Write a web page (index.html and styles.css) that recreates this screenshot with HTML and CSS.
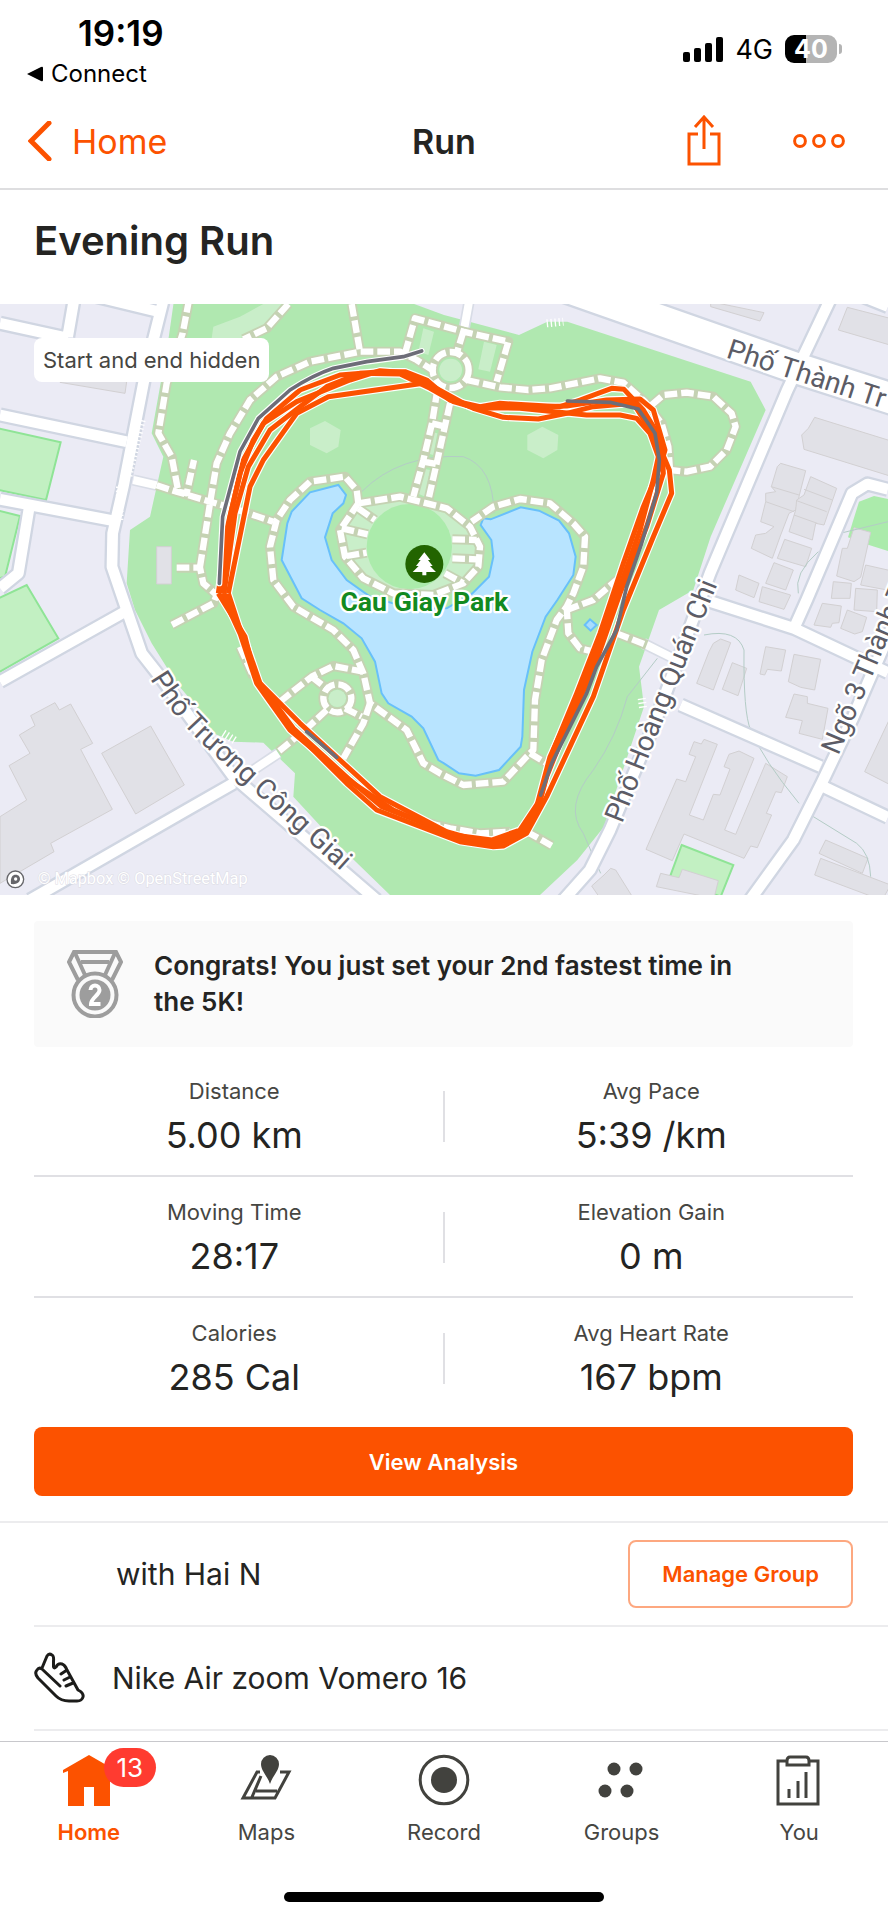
FILE: index.html
```html
<!DOCTYPE html>
<html lang="en">
<head>
  <meta charset="UTF-8" />
  <meta name="viewport" content="width=device-width, initial-scale=1.0"/>
  <title>Evening Run</title>
  <link rel="stylesheet" href="styles.css">
</head>
<body>

  <div class="status">
    <div class="status-left">
      <div class="clock">19:19</div>
      <a class="back-app" href="#"><svg width="16" height="16" viewBox="0 0 16 16"><path d="M0 8L14 1Q16 0 16 2V14Q16 16 14 15Z"/></svg>Connect</a>
    </div>
    <div class="status-right">
      <svg width="40" height="25" viewBox="0 0 40 25"><rect y="15" width="7" height="10" rx="2"/><rect x="11" y="11" width="7" height="14" rx="2"/><rect x="22" y="6" width="7" height="19" rx="2"/><rect x="33" width="7" height="25" rx="2"/></svg>
      <span class="network">4G</span>
      <span class="battery">40</span>
    </div>
  </div>

  <header class="header">
    <a class="back" href="#"><svg width="24" height="40" viewBox="0 0 24 40"><path d="M21 2L3 20L21 38"/></svg>Home</a>
    <h1>Run</h1>
    <div class="actions">
      <button aria-label="Share"><svg width="34" height="52" viewBox="0 0 34 52"><path d="M11 19H2V49H32V19H23M17 34V3M8 12L17 2L26 12"/></svg></button>
      <button aria-label="More"><svg width="52" height="14" viewBox="0 0 52 14"><circle cx="7" cy="7" r="5.4"/><circle cx="26" cy="7" r="5.4"/><circle cx="45" cy="7" r="5.4"/></svg></button>
    </div>
  </header>

  <h2 class="title">Evening Run</h2>

  <div class="map">
    <svg viewBox="0 12 2664 1773">
      <defs>
        <g id="roads">
          <path d="M490 0L440 200L370 560L338 700L336 800L370 900L425 1060L480 1130L700 1430L1130 1800"/>
          <path d="M0 70L205 115M222 0L203 110M250 -20L475 35M0 345L380 425M0 598L340 662M88 620L55 820L0 865"/>
          <path d="M0 1145L375 935M90 1800L560 1530L700 1450"/>
          <path d="M2490 0L2362 270L2130 820L1960 1280L1830 1590L1770 1710L1690 1800"/>
          <path d="M2132 905L2382 985L2664 1118M2042 1215L2462 1400M2470 1460L2664 1552"/>
          <path d="M2664 568L2602 552L2556 580L2420 900L2382 985M2720 880L2560 1250L2465 1450L2380 1620L2250 1800M2590 -10L2664 20"/>
        </g>
        <g id="lanes"><path d="M1408 0L1390 100M400 540L470 556M700 1450L835 1360M1930 1030L2030 1080"/></g>
        <g id="paths">
          <path d="M567 0L548 100L500 250L475 400L515 470L535 575L560 580L582 480"/>
          <path d="M865 12L800 85L730 118M1055 12L1080 155"/>
          <path d="M600 800L630 610L650 490L690 400L750 300L830 230L930 185L1080 155L1200 155L1250 180L1305 215"/>
          <path d="M1215 160L1245 55L1390 95L1525 125L1490 245M1390 95L1370 160"/>
          <path d="M1400 240L1500 262L1585 270L1650 265L1800 235L1870 248L1935 305L1985 370L2005 440L2010 510"/>
          <path d="M1955 315L1990 285L2060 278L2140 290L2195 340L2207 380L2180 450L2130 500L2060 515L2010 510"/>
          <circle cx="1352" cy="210" r="54"/>
          <path d="M1312 270L1296 370L1270 480L1240 590M1350 310L1330 400L1310 490L1285 600M1296 370L1336 380M1270 485L1310 492"/>
          <path d="M470 556L530 575L630 605L700 625L820 665"/>
          <path d="M1075 610L1070 570L1035 530L930 545L870 600L830 660L810 740L820 840L880 920L1000 990L1060 1050L1090 1120L1110 1210L1220 1290L1270 1390L1320 1420L1390 1455L1510 1445L1580 1370L1600 1350L1605 1200L1625 1080L1670 960L1700 920L1720 880L1750 800L1755 710L1720 670L1650 610L1560 597L1480 620L1415 665"/>
          <path d="M1075 610L1200 590L1340 625L1410 680L1440 740L1435 800L1390 850L1300 885L1180 880L1090 835L1035 770L1020 690L1075 610"/>
          <path d="M1075 625L1125 660M1025 685L1103 703M1040 768L1100 758M1357 718L1430 720M1357 775L1430 778M1335 820L1390 850"/>
          <path d="M530 803H600L610 850L650 885L640 910L515 975"/>
          <path d="M840 1205L935 1130L1000 1098L1090 1115M935 1130L985 1170M980 1230L915 1290L835 1355M1035 1225L1085 1250M1110 1210L1090 1270L1030 1375"/>
          <circle cx="1012" cy="1195" r="42"/>
          <path d="M1700 920L1705 1000L1740 1045L1800 1060M1700 930L1780 900L1850 840M1850 1000L1940 1035M1590 1360L1640 1390M1580 1595L1655 1637"/>
          <path d="M720 1040L760 1130M1150 1500L1250 1560L1350 1585L1440 1600L1530 1595"/>
        </g>
        <path id="truong" d="M450 1136C510 1235 560 1290 640 1362S 950 1650 1090 1772"/>
        <g id="track">
          <path d="M665 880L690 650L720 520L760 420L800 355L900 270L1020 225L1140 215L1215 215L1280 240L1350 300L1440 320L1500 310L1680 320L1740 300L1835 265L1872 268L1930 330L1985 420L1990 520L1940 680L1860 880L1780 1110L1700 1280L1640 1430L1610 1540L1545 1610L1480 1635L1390 1620L1180 1530L1060 1450L870 1290L770 1150L720 1000L665 880"/>
          <path d="M655 880L680 690L730 480L790 370L890 305L1050 240L1140 212L1215 218L1300 260L1400 315L1440 325L1700 318L1820 300L1920 297L1960 330L1995 450L1980 500L1930 620L1870 790L1800 1000L1730 1180L1660 1350L1620 1500L1560 1590L1475 1620L1360 1605L1145 1520L1050 1440L880 1285L765 1130L735 1010L655 880"/>
          <path d="M685 880L750 560L790 480L890 340L985 290L1270 250L1340 290L1420 325L1510 352L1615 357L1700 340L1780 320L1900 310L1970 420L2008 510L2015 580L1960 710L1870 930L1780 1190L1640 1490L1580 1600L1510 1638L1480 1640L1380 1625L1130 1530L1040 1450L860 1270L770 1140L685 880"/>
          <path d="M672 880L705 640L745 500L810 390L900 320L980 260L1080 220L1200 222L1290 265L1360 305L1420 322L1560 325L1760 345L1860 345L1910 355L1950 400L1975 470L1960 540L1920 690L1860 860L1790 1060L1700 1260L1650 1370L1610 1520L1570 1600L1470 1632L1340 1595L1140 1490L1020 1380L900 1270L780 1150L735 1020L672 880"/>
        </g>
      </defs>

      <path class="ground" d="M0 0H2664V1785H0Z"/>
      <path class="park" d="M522 0L505 120L480 260L455 400L490 470L470 560L450 650L390 690L380 850L405 930L455 1030L530 1150L590 1220L640 1300L700 1325L790 1328L885 1420L880 1490L1000 1620L1170 1785H1620L1732 1680L1812 1580L1872 1400L1932 1220L1917 1100L1977 930L2080 870L2132 710L2297 330L2252 245L1702 65L1642 65L1557 105L1332 45L1210 0Z"/>
      <path class="glade" d="M640 80L720 50L790 12H860L780 90L720 115H635ZM1270 85L1302 95L1285 165L1255 155ZM1452 125L1490 135L1470 215L1435 208ZM975 363L1022 390L1015 440L980 460L930 435V385ZM1627 380L1675 405L1672 450L1630 475L1582 450V405ZM1290 395L1312 400L1300 465L1282 460ZM1265 505L1290 510L1275 590L1252 580Z"/>

      <g class="lot">
        <path d="M-5 385L182 427L138 600L-5 570ZM-5 632L60 648L15 830L-5 835ZM-5 895L80 855L175 1015L-5 1118Z"/>
        <path d="M2045 1635L2200 1695L2162 1790L2010 1730Z"/>
      </g>
      <path class="garden" d="M2577 605L2622 588L2670 598V755L2607 735L2544 712Z"/>

      <g class="house">
        <path d="M165 1208L178 1230L212 1212L278 1330L242 1348L337 1528L152 1630L162 1655L0 1750V1550L80 1500L27 1397L90 1360L58 1305L105 1277L92 1247ZM305 1360L452 1278L553 1455L407 1542Z"/>
        <path d="M470 740H514V852H470ZM180 235L380 245L375 280L180 247Z"/>
        <path d="M2132 5L2292 38L2280 63L2132 20ZM2542 22L2670 55V135L2515 90ZM2444 352L2670 422V528L2412 448L2405 405L2425 385Z"/>
      </g>
      <g class="house" transform="translate(1332 0)">
        <path d="M1010 490L1085 512L1070 570L1055 630L1035 640L1010 705L985 775L922 745L935 705L965 700L990 680L950 665L965 605V580L995 575L982 560L1000 500ZM982 560L1065 585M965 605L1050 635"/>
        <path d="M1100 530L1178 565L1140 675L1115 670L1105 720L1035 695L1055 630L1058 600L1080 585ZM1080 568L1165 600M1058 602L1148 635M1050 645L1120 670"/>
        <path d="M1022 718L1103 745L1085 800L1000 775ZM990 788L1048 810L1025 870L965 850ZM885 825L945 850L930 893L875 870ZM955 860L1040 885L1020 928L945 905Z"/>
        <path d="M1230 683L1280 697L1250 832L1230 845L1178 828L1195 745H1210ZM1265 795L1340 812V872L1250 855ZM1168 845L1222 850L1218 895H1162ZM1235 865L1300 870L1298 935L1230 930Z"/>
      </g>
      <g class="house" transform="translate(1332 900)">
        <path d="M1135 10L1192 18L1185 68L1165 70L1160 82L1110 75ZM1210 30L1268 52L1255 95L1232 102L1190 85Z"/>
        <path d="M830 117L860 128L808 270L758 250L795 155L808 130ZM865 188L908 205L882 287L835 268ZM965 140L1025 150L1012 213L970 208L962 225L948 222ZM1050 163L1130 178L1112 270L1070 262L1033 245ZM1050 282L1090 290V310L1152 325L1135 418L1065 400L1075 362L1025 352Z"/>
        <path d="M780 418L820 433L736 645L778 660L808 583L828 585L858 507L840 500L855 463L885 453L930 475L842 690L875 703L965 490L1030 530L1012 578L995 575L967 640L983 645L940 743L920 738L900 775L720 702L685 782L606 748L698 537L725 545L755 470L735 463L750 425L772 432Z"/>
        <path d="M715 808L823 842L810 895L637 860L650 820L705 833ZM500 805L515 810L565 890H465L443 858L480 825ZM1145 720L1272 775L1255 820L1125 760ZM1130 775L1340 855L1320 890H1285L1112 825ZM1340 350V555L1262 515Z"/>
      </g>
      <path class="creek" d="M2112 1005Q2212 985 2232 1050Q2230 1240 2252 1290Q2290 1380 2397 1510M1972 1075L1882 1190Q1850 1310 1780 1410Q1690 1520 1750 1600L1802 1720M2432 1545L2570 1630Q2610 1660 2612 1730M2664 665L2520 700M2455 755Q2380 820 2395 880M1085 575Q1200 460 1390 470Q1480 500 1482 640"/>

      <use href="#roads" class="road-edge"/>
      <path class="avenue-edge" d="M1500 -108L1802 -2L2400 208L2720 310"/>
      <use href="#lanes" class="lane-edge"/>
      <use href="#roads" class="road"/>
      <path class="avenue" d="M1500 -108L1802 -2L2400 208L2720 310"/>
      <use href="#lanes" class="lane"/>
      <path class="steps" d="M425 360L385 530M360 560L358 660M670 1300L710 1325M1640 70L1690 65M1925 1195L1930 1230"/>

      <path class="lake" d="M875 635L930 577L1015 555L1038 585L1030 610L998 640L975 712L995 780L1040 840L1110 890L1230 925H1340L1417 880L1467 830L1480 770L1474 720L1442 675L1450 655L1472 658L1562 622L1617 632L1677 662L1707 700L1727 770L1720 825L1672 900L1637 950L1597 1055L1572 1170L1567 1310L1562 1340L1497 1410L1427 1427L1377 1420L1332 1390L1315 1380L1270 1285L1235 1250L1165 1210L1145 1180L1125 1085L1085 1015L1030 970L960 930L905 895L845 780L862 670Z"/>
      <path class="pond" d="M1754 975L1770 958L1790 975L1772 992Z"/>
      <path class="glade" d="M1075 610L1200 590L1340 625L1410 680L1440 740L1435 800L1390 850L1300 885H1180L1090 835L1035 770L1020 690Z"/>
      <circle class="lawn" cx="1228" cy="740" r="128"/>

      <use href="#paths" class="path-edge"/>
      <use href="#paths" class="path"/>
      <circle class="glade" cx="1352" cy="210" r="34"/>
      <circle class="glade" cx="1012" cy="1195" r="26"/>

      <g class="label">
        <text transform="translate(2176 172) rotate(18)">Phố Thành Tr</text>
        <text transform="translate(1866 1572) rotate(-68.3)">Phố Hoàng Quán Chi</text>
        <text transform="translate(2515 1368) rotate(-67)">Ngõ 3 Thành T</text>
        <text><textPath href="#truong">Phố Trương Công Giai</textPath></text>
      </g>

      <use href="#track" class="track-edge"/>
      <use href="#track" class="track"/>
      <path class="hidden-edge" d="M658 850L668 650L720 455L775 355L870 270Q940 225 1000 205L1100 185L1210 170L1265 153"/>
      <path class="hidden-part" d="M658 850L668 650L720 455L775 355L870 270Q940 225 1000 205L1100 185L1210 170L1265 153M1702 303L1830 307L1915 327L1965 400L1978 480L1970 580L1925 730L1880 860L1850 990L1790 1100L1760 1180L1655 1390L1622 1485M920 1295L1010 1372"/>

      <circle class="poi" cx="1273" cy="792" r="57"/>
      <path class="tree" d="M1273 757L1291 780H1284L1298 798H1290L1308 816H1279V826H1267V816H1238L1256 798H1248L1262 780H1255Z"/>
      <text class="poi-name" x="1273" y="932">Cau Giay Park</text>

      <circle class="logo" cx="46" cy="1738" r="25"/>
      <path class="logo-mark" d="M33 1752C31 1730 38 1724 47 1724C56 1724 61 1731 60 1738C59 1748 50 1754 33 1752Z"/>
      <circle class="logo-dot" cx="47" cy="1737" r="5"/>
      <text class="credit" x="113" y="1752">© Mapbox © OpenStreetMap</text>
    </svg>
    <span class="notice">Start and end hidden</span>
  </div>

  <main>
    <div class="congrats">
      <svg width="56" height="68" viewBox="0 0 56 68">
        <path d="M11 30L2 12L7 2H49L54 12L45 30M8 3L18 25M48 3L38 25M14 12H42"/>
        <circle cx="28" cy="45" r="21.5"/>
        <circle class="disc" cx="28" cy="45" r="15.5"/>
        <path class="two" d="M23.500 40C23.500 34 32.500 34 32.500 40C32.500 45 24 48 24 54H33.500"/>
      </svg>
      <p>Congrats! You just set your 2nd fastest time in the 5K!</p>
    </div>

    <dl class="stats">
      <div><dt>Distance</dt><dd>5.00 km</dd></div>
      <div><dt>Avg Pace</dt><dd>5:39 /km</dd></div>
      <div><dt>Moving Time</dt><dd>28:17</dd></div>
      <div><dt>Elevation Gain</dt><dd>0 m</dd></div>
      <div><dt>Calories</dt><dd>285 Cal</dd></div>
      <div><dt>Avg Heart Rate</dt><dd>167 bpm</dd></div>
    </dl>

    <button class="btn">View Analysis</button>
  </main>

  <div class="rows">
    <div class="row group">
      <span>with Hai N</span>
      <button class="btn-outline">Manage Group</button>
    </div>
    <div class="row gear">
      <svg width="52" height="52" viewBox="0 0 52 52"><path d="M8 16L13 4Q15 1 18 3Q20 4 19.500 9V15Q20 17 22 15Q24 11 28 12Q31 13 33 18L44 38Q50 41 49 45Q48 49 43 49H35Q27 49 22 44L4 26Q0 21 3 18Q5 15 8 17L26 34M33 18L27 22M36 25L30 28M39 31L32 34"/></svg>
      <span>Nike Air zoom Vomero 16</span>
    </div>
  </div>

  <nav class="tabs">
    <a class="active" href="#">
      <span class="icon"><svg width="52" height="52" viewBox="0 0 52 52"><path class="fill" d="M0 16L26 1L52 16V19L47 17V52H31V33H21V52H5V17L0 19Z"/></svg><span class="badge">13</span></span>
      Home
    </a>
    <a href="#">
      <span class="icon"><svg width="52" height="52" viewBox="0 0 52 52"><path d="M20 18H17L3 44H35L49 18H40M21 22L12 43M16 37H37"/><path class="fill" d="M30 30C27 21 21 17 21 10A9 9 0 0 1 39 10C39 17 33 21 30 30Z"/></svg></span>
      Maps
    </a>
    <a href="#">
      <span class="icon"><svg width="52" height="52" viewBox="0 0 52 52"><circle cx="26" cy="26" r="23.800"/><circle class="fill" cx="26" cy="26" r="13"/></svg></span>
      Record
    </a>
    <a href="#">
      <span class="icon"><svg width="52" height="52" viewBox="0 0 52 52"><g class="fill"><circle cx="18" cy="15" r="6.500"/><circle cx="40" cy="15" r="6.500"/><circle cx="9" cy="37" r="6.500"/><circle cx="31" cy="37" r="6.500"/></g></svg></span>
      Groups
    </a>
    <a href="#">
      <span class="icon"><svg width="52" height="52" viewBox="0 0 52 52"><path d="M14 7H5V50H45V7H36M14 11V7Q14 3 17 3H33Q36 3 36 7V11ZM16 44V35M25 44V27M33 44V18"/></svg></span>
      You
    </a>
  </nav>

  <div class="home-bar"></div>

</body>
</html>
```
FILE: styles.css
```css
:root {
  --accent: #fc5200;
  --text: #242422;
  --muted: #464642;
  --line: #e0e0e4;
}

* {
  box-sizing: border-box;
}

body {
  margin: 0;
  min-height: 100vh;
  display: flex;
  flex-direction: column;
  font-family: Inter, 'Liberation Sans', sans-serif;
  background-color: #fff;
  color: var(--text);
}

svg {
  display: block;
  flex: none;
}

button {
  font-family: inherit;
  cursor: pointer;
}

a {
  color: inherit;
  text-decoration: none;
}

.status {
  display: flex;
  justify-content: space-between;
  height: 100px;
  padding: 12px 51px 0 27px;
  color: #000;
}

.clock {
  padding-left: 51px;
  font-size: 35px;
  line-height: 42px;
  font-weight: 600;
}

.back-app {
  display: flex;
  align-items: center;
  gap: 8px;
  font-size: 24px;
  line-height: 40px;
}

.status-right {
  display: flex;
  align-items: center;
  gap: 12px;
  height: 74px;
}

.network {
  font-size: 27px;
}

.battery {
  position: relative;
  width: 52px;
  height: 28px;
  border-radius: 9px;
  background: linear-gradient(90deg, #000 40%, #b4b4b4 40%);
  color: #fff;
  font-size: 25px;
  line-height: 28px;
  font-weight: 700;
  text-align: center;
}

.battery::after {
  content: '';
  position: absolute;
  right: -5px;
  top: 9px;
  width: 3px;
  height: 10px;
  border-radius: 0 3px 3px 0;
  background: #b4b4b4;
}

.header {
  display: grid;
  grid-template-columns: 1fr auto 1fr;
  align-items: center;
  height: 90px;
  padding: 0 28px 6px;
  border-bottom: 2px solid #dedee0;
}

.header svg {
  fill: none;
  stroke: var(--accent);
  stroke-width: 3;
}

.back {
  display: flex;
  align-items: center;
  gap: 20px;
  color: var(--accent);
  font-size: 34px;
}

.header .back svg {
  stroke-width: 5;
  stroke-linecap: round;
}

.header h1 {
  margin: 0;
  font-size: 34px;
  font-weight: 600;
}

.actions {
  display: flex;
  justify-content: flex-end;
  align-items: center;
  gap: 72px;
  padding-right: 15px;
}

.actions button {
  padding: 0;
  border: none;
  background: none;
}

.title {
  margin: 0;
  padding: 26px 34px 38px;
  font-size: 40px;
  line-height: 50px;
  font-weight: 600;
}

/* map */
.map {
  position: relative;
  overflow: hidden;
}

.map svg {
  width: 100%;
  height: auto;
}

.notice {
  position: absolute;
  left: 34px;
  top: 34px;
  padding: 0 9px;
  border-radius: 8px;
  background: #fff;
  color: var(--muted);
  font-size: 22px;
  line-height: 44px;
}

.ground { fill: #ebebf5; }
.park { fill: #b0e8b0; }
.lawn, .garden { fill: #abebab; }
.glade { fill: #c9eec9; }
.lot { fill: #c2f0c2; stroke: #8fe496; stroke-width: 6; }
.house { fill: #e1e1e7; stroke: #d2d0d2; stroke-width: 3; }
.lake { fill: #b8e4ff; stroke: #68c0fa; stroke-width: 6; }
.pond { fill: #a8dcff; stroke: #68c0fa; stroke-width: 6; }

.creek, .road, .road-edge, .avenue, .avenue-edge, .lane, .lane-edge,
.path, .path-edge, .track, .track-edge, .hidden-part, .hidden-edge, .steps {
  fill: none;
  stroke-linejoin: round;
}

.creek { stroke: #b4ccc6; stroke-width: 3; }
.road-edge { stroke: #d0d6e2; stroke-width: 46; }
.road { stroke: #fff; stroke-width: 32; }
.avenue-edge { stroke: #d0d6e2; stroke-width: 104; }
.avenue { stroke: #fff; stroke-width: 90; }
.lane-edge { stroke: #d8dce6; stroke-width: 34; }
.lane { stroke: #fff; stroke-width: 24; }
.steps { stroke: #fff; stroke-width: 24; stroke-dasharray: 4 8; }
.path-edge { stroke: #c5d2b3; stroke-width: 30; }
.path { stroke: #fff; stroke-width: 19; stroke-dasharray: 38 12; }
.track-edge { stroke: #fff; stroke-width: 22; }
.track { stroke: var(--accent); stroke-width: 15; }
.hidden-edge { stroke: #fff; stroke-width: 18; stroke-linecap: round; }
.hidden-part { stroke: #6d6d78; stroke-width: 11; stroke-linecap: round; }

.label text, .poi-name {
  font-family: Roboto, 'Noto Sans', sans-serif;
  font-size: 84px;
  fill: #5c5c66;
  stroke: #fff;
  stroke-width: 14;
  stroke-linejoin: round;
  paint-order: stroke;
}

.poi-name {
  font-size: 80px;
  font-weight: 700;
  fill: #128a20;
  text-anchor: middle;
}

.poi { fill: #226400; }
.tree { fill: #fff; }
.logo { fill: #fff; stroke: #66666a; stroke-width: 4; }
.logo-mark { fill: #66666a; }
.logo-dot { fill: #fff; }

.credit {
  font-family: Roboto, sans-serif;
  font-size: 49px;
  fill: #fff;
  stroke: #dcdce4;
  stroke-width: 3;
  paint-order: stroke;
}

/* activity summary */
main {
  padding: 26px 35px 25px 34px;
}

.congrats {
  display: flex;
  gap: 31px;
  height: 126px;
  padding: 27px 100px 0 33px;
  border-radius: 4px;
  background: #fafafa;
}

.congrats svg {
  margin-top: 2px;
  fill: none;
  stroke: #9d9d9d;
  stroke-width: 4;
}

.congrats .disc {
  fill: #9d9d9d;
  stroke: none;
}

.congrats .two {
  stroke: #fff;
}

.congrats p {
  margin: 0;
  font-size: 26px;
  line-height: 36px;
  font-weight: 600;
}

.stats {
  display: grid;
  grid-template-columns: 1fr 1fr;
  margin: 9px 0 8px;
  text-align: center;
}

.stats div {
  position: relative;
  height: 121px;
  padding: 19px 0 0 6px;
  border-bottom: 2px solid var(--line);
}

.stats div:nth-child(odd) {
  padding: 19px 9px 0 0;
}

.stats div:nth-last-child(-n+2) {
  border-bottom: none;
}

.stats div:nth-child(odd)::after {
  content: '';
  position: absolute;
  right: -1px;
  top: 35px;
  width: 2px;
  height: 51px;
  background: var(--line);
}

.stats dt {
  color: var(--muted);
  font-size: 22px;
  line-height: 32px;
}

.stats dd {
  margin: 0;
  font-size: 36px;
  line-height: 56px;
}

.btn {
  width: 100%;
  height: 69px;
  border: none;
  border-radius: 8px;
  background: var(--accent);
  color: #fff;
  font-size: 22px;
  font-weight: 600;
}

.row {
  display: flex;
  align-items: center;
  height: 104px;
  margin-left: 34px;
  border-bottom: 2px solid #ececee;
  font-size: 30px;
}

.rows {
  border-top: 2px solid #ececee;
}

.group {
  justify-content: space-between;
  padding: 0 35px 0 82px;
}

.gear {
  gap: 26px;
}

.gear svg {
  fill: none;
  stroke: #1c1c1a;
  stroke-width: 3;
  stroke-linecap: round;
  stroke-linejoin: round;
}

.btn-outline {
  height: 68px;
  padding: 0 32px;
  border: 2px solid #fda880;
  border-radius: 8px;
  background: #fff;
  color: var(--accent);
  font-size: 22px;
  font-weight: 600;
}

/* bottom tabs */
.tabs {
  display: flex;
  margin-top: 10px;
  padding-top: 12px;
  border-top: 1px solid #c8c8cc;
}

.tabs a {
  flex: 1;
  display: flex;
  flex-direction: column;
  align-items: center;
  gap: 10px;
  color: var(--muted);
  font-size: 22px;
  line-height: 32px;
}

.tabs svg {
  fill: none;
  stroke: #42423e;
  stroke-width: 3;
}

.tabs .fill {
  fill: #42423e;
  stroke: none;
}

.tabs .active {
  color: var(--accent);
  font-weight: 600;
}

.tabs .active .fill {
  fill: var(--accent);
}

.icon {
  position: relative;
}

.badge {
  position: absolute;
  left: 41px;
  top: -6px;
  width: 52px;
  border-radius: 20px;
  background: #ff3b30;
  color: #fff;
  font-size: 26px;
  line-height: 39px;
  font-weight: 400;
  text-align: center;
}

.home-bar {
  width: 36%;
  height: 10px;
  margin: auto auto 18px;
  border-radius: 5px;
  background: #000;
}
```
